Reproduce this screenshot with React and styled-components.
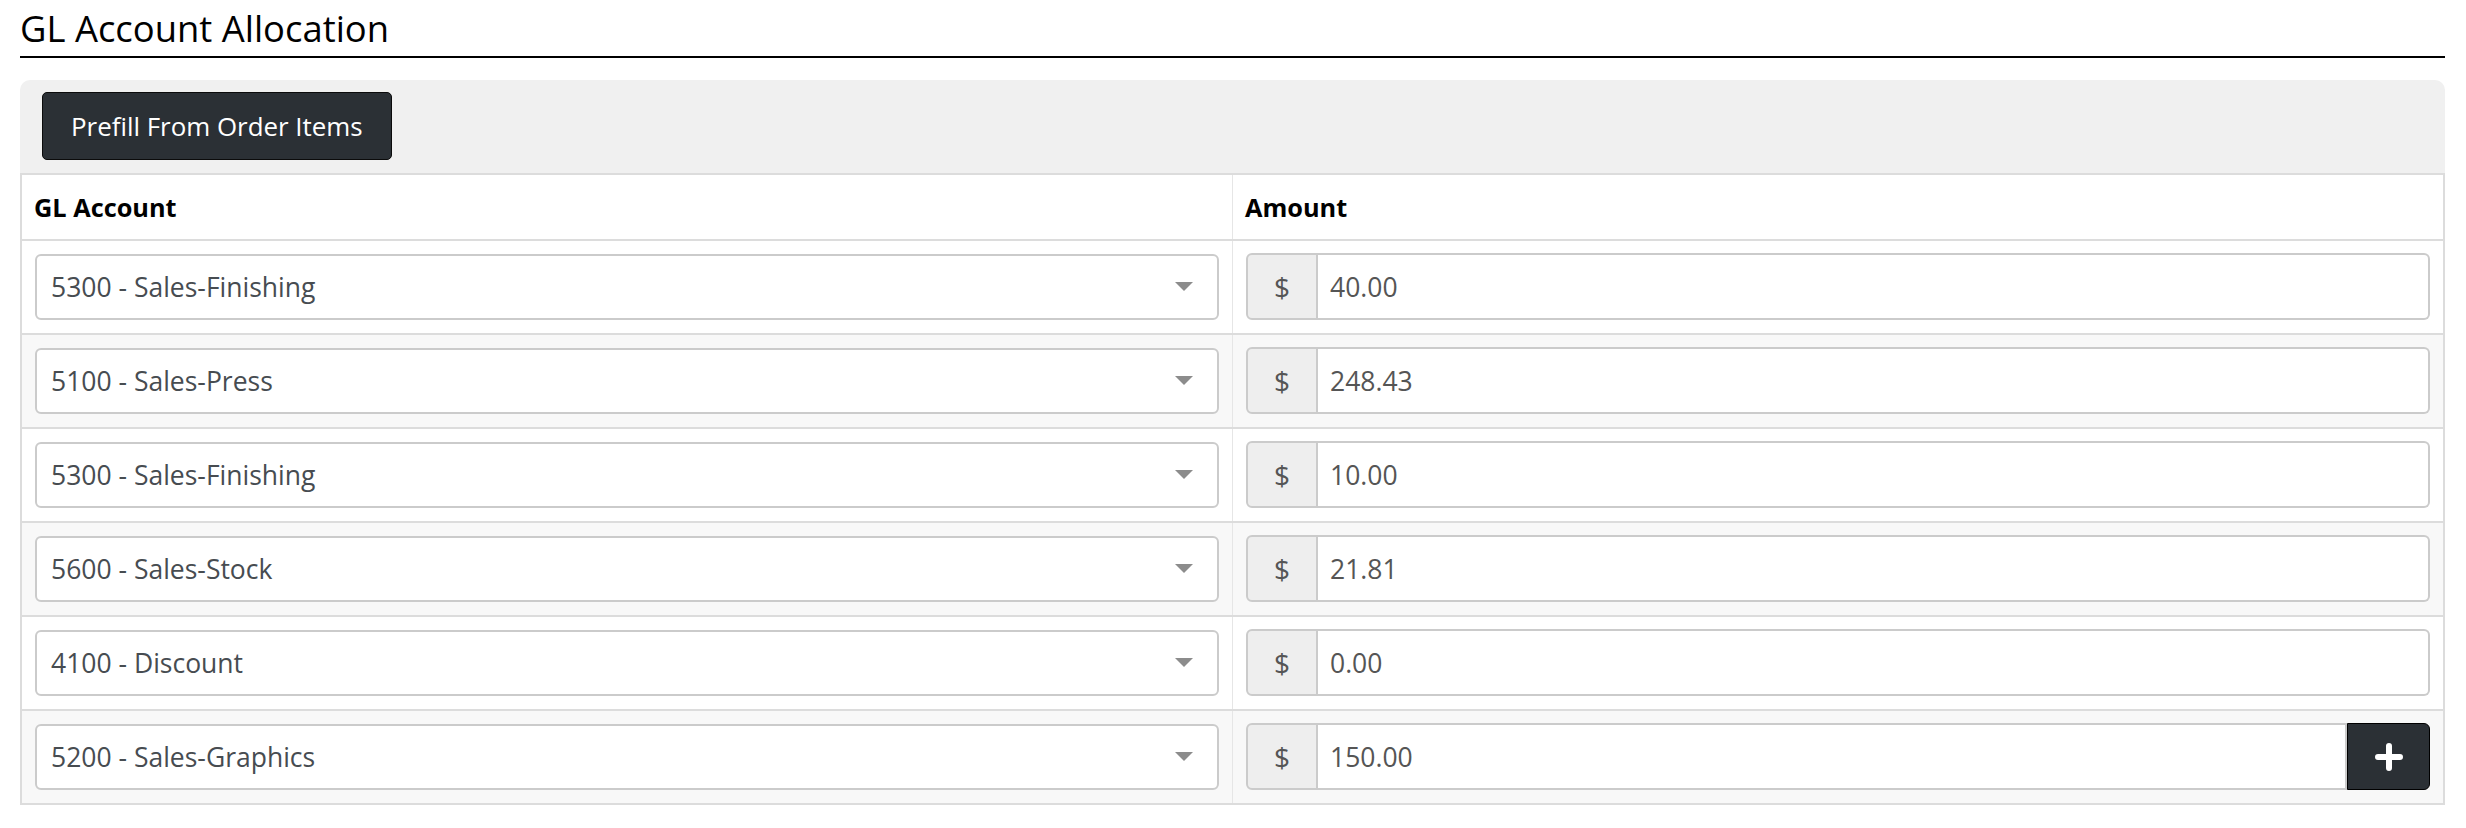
import React from "react";
import styled, { createGlobalStyle } from "styled-components";

const GlobalStyle = createGlobalStyle`
  body {
    margin: 0;
    background: #fff;
    font-family: "Open Sans", "Noto Sans", sans-serif;
  }
`;

const Page = styled.div`
  padding: 0 21px 0 20px;
`;

const Title = styled.h4`
  margin: 0;
  padding: 5px 0 5px;
  font-size: 36.4px;
  line-height: 46px;
  font-weight: 400;
  color: #000;
  border-bottom: 2px solid #000;
`;

const Card = styled.div`
  margin-top: 22px;
  background: #f0f0f0;
  border-radius: 10px 10px 0 0;
`;

const CardHeader = styled.div`
  display: flex;
  padding: 12px 22px 13px;
`;

const DarkButton = styled.button`
  height: 68px;
  padding: 0 28px;
  background: #2b3035;
  border: 1px solid #0b0b0b;
  border-radius: 5px;
  color: #fff;
  font-family: inherit;
  font-size: 25.9px;
`;

const Table = styled.table`
  width: 100%;
  border-collapse: collapse;
  table-layout: fixed;
  background: #fff;
  border: 2px solid #dcdcdc;
`;

const HeadCell = styled.th`
  height: 64px;
  padding: 0 12px;
  text-align: left;
  font-size: 25.3px;
  font-weight: 700;
  color: #000;
  border-left: ${(p) => (p.first ? "none" : "1px solid #e6e6e6")};
`;

const Row = styled.tr`
  background: ${(p) => (p.striped ? "#f8f8f8" : "#fff")};
  border-top: 2px solid #dcdcdc;
`;

const Cell = styled.td`
  height: 92px;
  padding: 12px 13px 13px;
  box-sizing: border-box;
  vertical-align: middle;
  border-left: ${(p) => (p.first ? "none" : "1px solid #e6e6e6")};
`;

const SelectWrap = styled.div`
  position: relative;
`;

const Select = styled.select`
  display: block;
  width: 100%;
  height: 66px;
  padding: 0 50px 0 14px;
  appearance: none;
  background: #fff;
  border: 2px solid #cbcbcb;
  border-radius: 6px;
  font-family: inherit;
  font-size: 26.5px;
  color: #474c51;
`;

const Caret = styled.svg`
  position: absolute;
  right: 26px;
  top: 50%;
  margin-top: -5px;
  pointer-events: none;
`;

const InputGroup = styled.div`
  display: flex;
  height: 67px;
`;

const Addon = styled.span`
  display: flex;
  align-items: center;
  justify-content: center;
  width: 72px;
  box-sizing: border-box;
  background: #eeeeee;
  border: 2px solid #cbcbcb;
  border-radius: 6px 0 0 6px;
  font-size: 28px;
  color: #555;
`;

const AmountInput = styled.input`
  flex: 1;
  min-width: 0;
  box-sizing: border-box;
  padding: 0 12px;
  background: #fff;
  border: 2px solid #cbcbcb;
  border-left: none;
  border-radius: ${(p) => (p.joined ? "0" : "0 6px 6px 0")};
  font-family: inherit;
  font-size: 26.5px;
  color: #555;
  outline: none;
`;

const AddButton = styled.button`
  width: 83px;
  display: flex;
  align-items: center;
  justify-content: center;
  background: #2b3035;
  border: 1px solid #000;
  border-radius: 0 6px 6px 0;
  padding: 0;
`;

const rows = [
  { account: "5300 - Sales-Finishing", amount: "40.00" },
  { account: "5100 - Sales-Press", amount: "248.43" },
  { account: "5300 - Sales-Finishing", amount: "10.00" },
  { account: "5600 - Sales-Stock", amount: "21.81" },
  { account: "4100 - Discount", amount: "0.00" },
  { account: "5200 - Sales-Graphics", amount: "150.00" },
];

const App = () => (
  <Page>
    <GlobalStyle />
    <Title>GL Account Allocation</Title>
    <Card>
      <CardHeader>
        <DarkButton>Prefill From Order Items</DarkButton>
      </CardHeader>
      <Table>
        <thead>
          <tr>
            <HeadCell first>GL Account</HeadCell>
            <HeadCell>Amount</HeadCell>
          </tr>
        </thead>
        <tbody>
          {rows.map((row, i) => {
            const last = i === rows.length - 1;
            return (
              <Row key={i} striped={i % 2 === 1}>
                <Cell first>
                  <SelectWrap>
                    <Select defaultValue={row.account}>
                      <option>{row.account}</option>
                    </Select>
                    <Caret width="18" height="10" viewBox="0 0 18 10">
                      <path d="M0 0 L18 0 L9 9 Z" fill="#8c8c8c" />
                    </Caret>
                  </SelectWrap>
                </Cell>
                <Cell>
                  <InputGroup>
                    <Addon>$</Addon>
                    <AmountInput readOnly value={row.amount} joined={last} />
                    {last && (
                      <AddButton>
                        <svg width="28" height="28" viewBox="0 0 28 28">
                          <path
                            d="M14 3 V25 M3 14 H25"
                            stroke="#fff"
                            strokeWidth="6"
                            strokeLinecap="round"
                          />
                        </svg>
                      </AddButton>
                    )}
                  </InputGroup>
                </Cell>
              </Row>
            );
          })}
        </tbody>
      </Table>
    </Card>
  </Page>
);

export default App;
